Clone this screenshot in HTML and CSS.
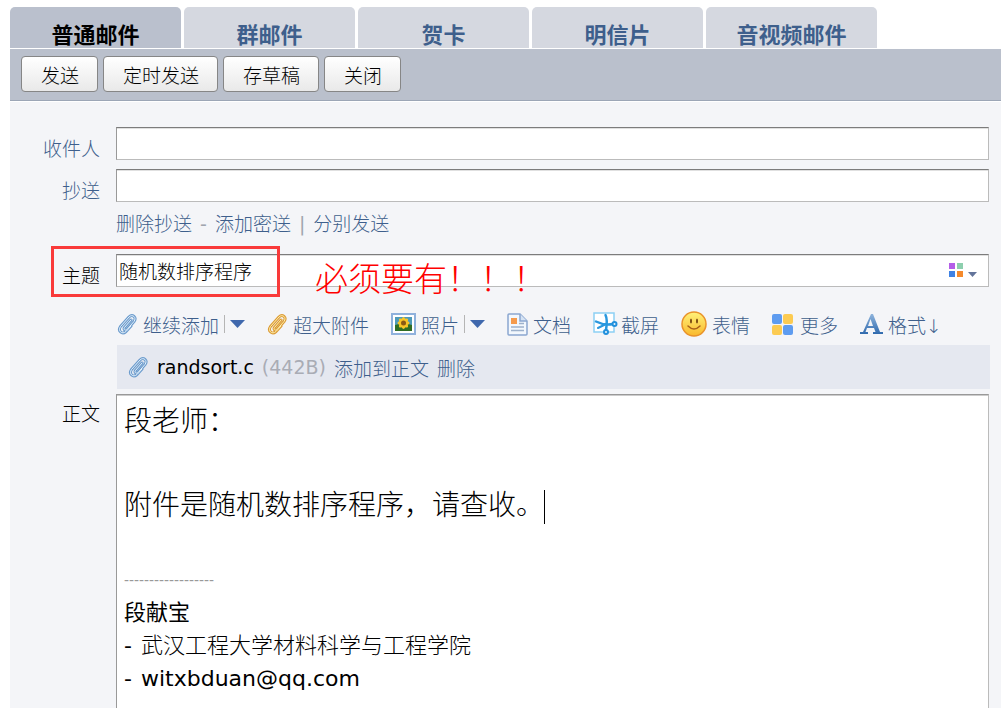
FILE: index.html
```
<!DOCTYPE html>
<html lang="zh-CN">
<head>
    <meta charset="UTF-8">
    <title>写信</title>
    <link rel="stylesheet" href="styles.css">
</head>
<body>

<svg width="0" height="0" class="defs" aria-hidden="true">
    <defs>
        <linearGradient id="faceFill" x1="0" y1="0" x2="0" y2="1">
            <stop offset="0" stop-color="#fff27a"/>
            <stop offset="1" stop-color="#f9b82c"/>
        </linearGradient>
        <linearGradient id="letterFill" x1="0" y1="0" x2="0" y2="1">
            <stop offset="0" stop-color="#8fb4dc"/>
            <stop offset="1" stop-color="#2f6aae"/>
        </linearGradient>
        <symbol id="clip" viewBox="0 0 21 22">
            <g fill="none" stroke-linecap="round" stroke-linejoin="round">
                <path class="clip-dark" stroke-width="3" d="M14 7 L7.5 14.5 C6 16.5 8.5 18 10 16.5 L17 8.5 C20 4.5 15.5 0.5 12 4 L3.5 13.5 C0.5 18 5 22 9 18.5 L14 13"/>
                <path class="clip-light" stroke-width="1" d="M14 7 L7.5 14.5 C6 16.5 8.5 18 10 16.5 L17 8.5 C20 4.5 15.5 0.5 12 4 L3.5 13.5 C0.5 18 5 22 9 18.5 L14 13"/>
            </g>
        </symbol>
    </defs>
</svg>

<nav class="tabs">
    <a href="#" class="tab active">普通邮件</a>
    <a href="#" class="tab">群邮件</a>
    <a href="#" class="tab">贺卡</a>
    <a href="#" class="tab">明信片</a>
    <a href="#" class="tab">音视频邮件</a>
</nav>

<div class="actions">
    <button type="button">发送</button>
    <button type="button">定时发送</button>
    <button type="button">存草稿</button>
    <button type="button">关闭</button>
</div>

<form class="compose">
    <div class="row">
        <label class="row-label link-label" for="to">收件人</label>
        <div class="field"><input type="text" id="to"></div>
    </div>
    <div class="row">
        <label class="row-label link-label" for="cc">抄送</label>
        <div class="field"><input type="text" id="cc"></div>
    </div>
    <div class="cc-links">
        <a href="#">删除抄送</a><span>-</span><a href="#">添加密送</a><span>|</span><a href="#">分别发送</a>
    </div>
    <div class="row subject">
        <label class="row-label" for="subject">主题</label>
        <div class="field">
            <input type="text" id="subject" value="随机数排序程序">
            <button type="button" class="color-btn" aria-label="标题颜色">
                <svg width="30" height="18" viewBox="0 0 30 18">
                    <rect x="1" y="1" width="6" height="6" fill="#b45ee8"/>
                    <rect x="9" y="1" width="6" height="6" fill="#8dcfae"/>
                    <rect x="1" y="9" width="6" height="6" fill="#3f82e4"/>
                    <rect x="9" y="9" width="6" height="6" fill="#f58a2c"/>
                    <path d="M20 10 H29 L24.500 15 Z" fill="#63749a"/>
                </svg>
            </button>
        </div>
        <div class="mark-box"></div>
        <div class="mark-text">必须要有！！！</div>
    </div>

    <div class="tools">
        <div class="tool">
            <svg class="clip blue" width="21" height="22"><use href="#clip"/></svg>
            <a href="#">继续添加</a>
            <button type="button" class="drop" aria-label="更多附件"><svg width="15" height="8" viewBox="0 0 15 8"><path d="M0 0 H15 L7.500 8 Z" fill="#3f68ad"/></svg></button>
        </div>
        <div class="tool">
            <svg class="clip gold" width="21" height="22"><use href="#clip"/></svg>
            <a href="#">超大附件</a>
        </div>
        <div class="tool">
            <svg width="25" height="22" viewBox="0 0 25 22">
                <rect x="1" y="1" width="23" height="20" fill="#fff" stroke="#8fb1dc" stroke-width="2"/>
                <rect x="4" y="4" width="17" height="14" fill="#4f9ab8"/>
                <path d="M4 12 L8 11 L12 14 L17 11 L21 12 V18 H4 Z" fill="#2f6d24"/>
                <g fill="#f8c526">
                    <ellipse cx="12.500" cy="10" rx="2.500" ry="6"/>
                    <ellipse cx="12.500" cy="10" rx="6" ry="2.500"/>
                    <ellipse cx="12.500" cy="10" rx="2.500" ry="6" transform="rotate(45 12.500 10)"/>
                    <ellipse cx="12.500" cy="10" rx="2.500" ry="6" transform="rotate(-45 12.500 10)"/>
                </g>
                <circle cx="12.500" cy="10" r="2.500" fill="#8a5a14"/>
            </svg>
            <a href="#">照片</a>
            <button type="button" class="drop" aria-label="更多照片"><svg width="15" height="8" viewBox="0 0 15 8"><path d="M0 0 H15 L7.500 8 Z" fill="#3f68ad"/></svg></button>
        </div>
        <div class="tool">
            <svg width="21" height="23" viewBox="0 0 21 23">
                <path d="M1 2 Q1 1 2 1 H13 L20 8 V21 Q20 22 19 22 H2 Q1 22 1 21 Z" fill="#f2f7fd" stroke="#8aa6d0" stroke-width="1.500"/>
                <path d="M13 1 V8 H20" fill="#d5e3f4" stroke="#8aa6d0" stroke-width="1.500"/>
                <rect x="4" y="5" width="6" height="6" fill="#f59a4c"/>
                <path d="M12 10.500 H17 M4 14 H17 M4 17.500 H17" stroke="#9db1cc" stroke-width="1.500"/>
            </svg>
            <a href="#">文档</a>
        </div>
        <div class="tool snap">
            <svg width="25" height="24" viewBox="0 0 25 24">
                <rect x="1" y="1" width="20" height="19" fill="#fff" stroke="#8cd0f4" stroke-width="1.500"/>
                <path d="M12.500 3 C14.500 7 14 12 13 18 M3 9.500 C8 12 15 13 20 12" fill="none" stroke="#2a98de" stroke-width="2.500" stroke-linecap="round"/>
                <circle cx="13" cy="20" r="2" fill="#e8f6ff" stroke="#2290dc" stroke-width="2"/>
                <circle cx="21.500" cy="12" r="2" fill="#e8f6ff" stroke="#2290dc" stroke-width="2"/>
                <path d="M5 16 L13 12" stroke="#2a98de" stroke-width="2" stroke-linecap="round"/>
            </svg>
            <a href="#">截屏</a>
        </div>
        <div class="tool">
            <svg width="26" height="26" viewBox="0 0 26 26">
                <circle cx="13" cy="13" r="12" fill="url(#faceFill)" stroke="#e9932b" stroke-width="1.500"/>
                <ellipse cx="10" cy="10" rx="1" ry="2.500" fill="#7a4a12"/>
                <ellipse cx="16" cy="10" rx="1" ry="2.500" fill="#7a4a12"/>
                <path d="M7 15 Q13 21 19 15" fill="none" stroke="#a8601a" stroke-width="1.500" stroke-linecap="round"/>
            </svg>
            <a href="#">表情</a>
        </div>
        <div class="tool more">
            <svg width="21" height="21" viewBox="0 0 21 21">
                <rect x="0" y="0" width="10" height="10" rx="2" fill="#5e9cf0"/>
                <rect x="11" y="0" width="10" height="10" rx="2" fill="#fccb52"/>
                <rect x="0" y="11" width="10" height="10" rx="2" fill="#fccb52"/>
                <rect x="11" y="11" width="10" height="10" rx="2" fill="#5e9cf0"/>
            </svg>
            <a href="#">更多</a>
        </div>
        <div class="tool">
            <svg width="23" height="22" viewBox="0 0 23 22">
                <path d="M11 1 H13 L20 19 H23 V21 H13 V19 H15.500 L14 15 H7 L5.500 19 H8 V21 H0 V19 H3 Z M10.500 6 L8 13 H13 Z" fill="url(#letterFill)" fill-rule="evenodd"/>
            </svg>
            <a href="#">格式↓</a>
        </div>
    </div>

    <div class="attachment">
        <svg class="clip blue" width="21" height="22"><use href="#clip"/></svg>
        <span class="file-name">randsort.c</span>
        <span class="file-size">(442B)</span>
        <a href="#">添加到正文</a>
        <a href="#">删除</a>
    </div>

    <div class="row body-row">
        <span class="row-label" id="body-label">正文</span>
        <div class="editor" contenteditable="true" role="textbox" aria-multiline="true" aria-labelledby="body-label" spellcheck="false">
            <p>段老师：</p>
            <p><br></p>
            <p>附件是随机数排序程序，请查收。<span class="caret"></span></p>
            <div class="signature">
                <div class="sign-line">------------------</div>
                <div><b>段献宝</b></div>
                <div><span class="dash">-</span>武汉工程大学材料科学与工程学院</div>
                <div><span class="dash">-</span><span class="mail">witxbduan@qq.com</span></div>
            </div>
        </div>
    </div>
</form>

</body>
</html>
```
FILE: styles.css
```
* {
    box-sizing: border-box;
}

body {
    margin: 0;
    padding: 7px 0 0 10px;
    height: 100vh;
    overflow: hidden;
    display: flex;
    flex-direction: column;
    background-color: #fff;
    color: #000;
    font-family: "DejaVu Sans", "Noto Sans CJK SC", sans-serif;
    font-size: 19px;
    font-weight: 300;
}

a {
    color: #3e5f8c;
    text-decoration: none;
}

button, input {
    font: inherit;
    color: inherit;
}

.defs {
    position: absolute;
}

/* tabs */
.tabs {
    display: flex;
    gap: 3px;
    margin-bottom: 1px;
}

.tab {
    width: 171px;
    height: 41px;
    padding-top: 7px;
    line-height: 38px;
    border-radius: 5px 5px 0 0;
    background-color: #d5d8e0;
    font-family: "Noto Sans CJK SC", sans-serif;
    font-size: 22px;
    font-weight: bold;
    text-align: center;
}

.tab.active {
    background-color: #bac0cd;
    color: #000;
}

.actions {
    display: flex;
    gap: 5px;
    padding: 7px 11px 8px;
    background-color: #bac0cc;
    border-bottom: 1px solid #9ca6b6;
    margin-bottom: 1px;
}

.actions button {
    height: 36px;
    padding: 0 18px 0 19px;
    border: 1px solid #868686;
    border-radius: 4px;
    background: linear-gradient(#fff, #e9e9e9);
    font-family: "Noto Sans CJK SC", sans-serif;
}

/* form */
.compose {
    flex: 1;
    min-height: 0;
    display: flex;
    flex-direction: column;
    padding: 25px 12px 0 0;
    background-color: #f4f5f8;
}

.row {
    display: flex;
    height: 33px;
    margin-bottom: 9px;
}

.row-label {
    width: 90px;
    margin-right: 16px;
    padding-top: 5px;
    line-height: 34px;
    text-align: right;
    flex-shrink: 0;
}

.link-label {
    color: #3e5f8c;
}

.field {
    flex: 1;
    display: flex;
    align-items: center;
    background-color: #fff;
    border: 1px solid #bbb;
    border-top-color: #7c7c7c;
    border-left-color: #999;
    box-shadow: inset 0 1px #e0e0e0;
}

.field input {
    flex: 1;
    min-width: 0;
    height: 100%;
    padding: 0 2px;
    border: none;
    outline: none;
    background: none;
}

.row, .cc-links, .tools, .attachment {
    flex-shrink: 0;
}

.cc-links {
    margin-left: 106px;
    height: 43px;
    line-height: 26px;
}

.cc-links span {
    margin: 0 8px;
    color: #a0a5ae;
    font-weight: 400;
}

.subject {
    position: relative;
    margin-bottom: 0;
}

.color-btn {
    display: flex;
    padding: 0;
    margin-right: 10px;
    border: none;
    background: none;
}

/* red annotation over the subject row */
.mark-box {
    position: absolute;
    left: 41px;
    top: -8px;
    width: 229px;
    height: 51px;
    border: 3px solid #f93a3a;
    pointer-events: none;
}

.mark-text {
    position: absolute;
    left: 305px;
    top: 4px;
    line-height: 44px;
    font-size: 33px;
    color: #f00;
    pointer-events: none;
}

.tools {
    display: flex;
    align-items: center;
    gap: 22px;
    margin-left: 107px;
    padding-top: 16px;
    height: 58px;
    white-space: nowrap;
}

.tool {
    display: flex;
    align-items: center;
    gap: 5px;
}

.tool.snap {
    gap: 3px;
}

.tool.more {
    gap: 7px;
}

.drop {
    display: flex;
    align-items: center;
    height: 18px;
    padding: 0 0 0 5px;
    border: none;
    border-left: 1px solid #b5b5b5;
    background: none;
}

.clip.blue {
    --dark: #6d9ccd;
    --light: #e2f1fc;
}

.clip.gold {
    --dark: #dc9c38;
    --light: #fff0ac;
}

.clip-dark {
    stroke: var(--dark);
}

.clip-light {
    stroke: var(--light);
}

.attachment {
    display: flex;
    align-items: center;
    gap: 8px;
    margin: 0 -1px 5px 107px;
    padding-left: 11px;
    height: 44px;
    background-color: #e5e8f0;
}

.file-name, .file-size, .dash, .mail {
    font-weight: 400;
}

.file-size {
    color: #a9acb5;
}

.body-row {
    flex: 1;
    min-height: 0;
    margin-bottom: 0;
}

.body-row .row-label {
    padding-top: 3px;
}

.editor {
    flex: 1;
    padding: 6px 7px 0;
    border: 1px solid #bbb;
    border-top-color: #999;
    border-left-color: #999;
    border-bottom: none;
    box-shadow: inset 0 1px #ccc;
    background-color: #fff;
    outline: none;
    overflow: hidden;
}

.editor p {
    margin: 0;
    font-size: 28px;
    line-height: 42px;
}

.caret {
    display: inline-block;
    width: 1px;
    height: 34px;
    background-color: #000;
    vertical-align: middle;
}

.signature {
    margin-top: 36px;
    font-size: 22px;
    line-height: 33px;
}

.sign-line {
    font-family: "Liberation Sans", sans-serif;
    font-size: 15px;
    color: #999;
}

.dash {
    margin-right: 9px;
}
```
